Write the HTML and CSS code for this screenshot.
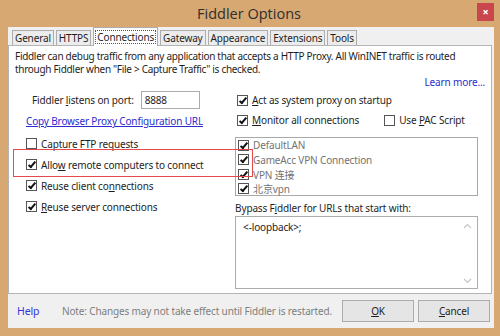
FILE: index.html
```html
<!DOCTYPE html>
<html lang="en">
<head>
  <meta charset="UTF-8">
  <title>Fiddler Options</title>
  <link rel="stylesheet" href="styles.css">
</head>
<body>
  <div class="window">
    <div class="titlebar">
      <span></span>
      <div class="title">Fiddler Options</div>
      <div class="close">×</div>
    </div>
    <div class="client">
      <div class="tabs">
        <div class="tab">General</div>
        <div class="tab">HTTPS</div>
        <div class="tab active"><span class="focus">Connections</span></div>
        <div class="tab">Gateway</div>
        <div class="tab">Appearance</div>
        <div class="tab">Extensions</div>
        <div class="tab">Tools</div>
      </div>
      <div class="panel">
        <p class="intro">Fiddler can debug traffic from any application that accepts a HTTP Proxy. All WinINET traffic is routed through Fiddler when "File &gt; Capture Traffic" is checked.</p>
        <div class="learn"><span class="link">Learn more...</span></div>
        <div class="columns">
          <div class="left">
            <div class="port-row">
              <span>Fiddler <u>l</u>istens on port:</span>
              <div class="port">8888</div>
            </div>
            <div class="link copy">Copy Browser Proxy Configuration URL</div>
            <div class="checks">
              <div class="check"><span class="cb"></span><span>Captur<u>e</u> FTP requests</span></div>
              <div class="check"><span class="cb on"></span><span>Allo<u>w</u> remote computers to connect</span></div>
              <div class="check"><span class="cb on"></span><span>Reuse client co<u>n</u>nections</span></div>
              <div class="check"><span class="cb on"></span><span><u>R</u>euse server connections</span></div>
            </div>
          </div>
          <div class="right">
            <div class="check row"><span class="cb on"></span><span><u>A</u>ct as system proxy on startup</span></div>
            <div class="row monitor">
              <div class="check"><span class="cb on"></span><span><u>M</u>onitor all connections</span></div>
              <div class="check pac"><span class="cb"></span><span>Use <u>P</u>AC Script</span></div>
            </div>
            <div class="list">
              <div class="item"><span class="cb on"></span><span>DefaultLAN</span></div>
              <div class="item"><span class="cb on"></span><span>GameAcc VPN Connection</span></div>
              <div class="item"><span class="cb on"></span><span>VPN 连接</span></div>
              <div class="item"><span class="cb on"></span><span>北京vpn</span></div>
            </div>
            <div class="bypass-label">Bypass F<u>i</u>ddler for URLs that start with:</div>
            <div class="bypass">
              <span class="bypass-text">&lt;-loopback&gt;;</span>
              <div class="scroll">
                <svg width="9" height="6" viewBox="0 0 9 6"><path d="M1 5 L4.5 1.5 L8 5" fill="none" stroke="#c4c4c4" stroke-width="1.2"/></svg>
                <svg width="9" height="6" viewBox="0 0 9 6"><path d="M1 1 L4.5 4.5 L8 1" fill="none" stroke="#c4c4c4" stroke-width="1.2"/></svg>
              </div>
            </div>
          </div>
        </div>
        <div class="mark"></div>
      </div>
      <div class="footer">
        <span class="help">Help</span>
        <span class="note">Note: Changes may not take effect until Fiddler is restarted.</span>
        <div class="buttons">
          <div class="btn"><u>O</u>K</div>
          <div class="btn"><u>C</u>ancel</div>
        </div>
      </div>
    </div>
  </div>
</body>
</html>
```

FILE: styles.css
```css
body {
  margin: 0;
  font-family: "Noto Sans", "Noto Sans CJK SC", sans-serif;
  font-size: 10px;
  letter-spacing: -0.15px;
  color: #1e1e1e;
}
u { text-decoration: underline; text-underline-offset: 1px; }
.window {
  width: 500px;
  height: 336px;
  background: #d8a873;
  padding: 0 6px 8px 8px;
  box-sizing: border-box;
  display: flex;
  flex-direction: column;
}
.titlebar {
  height: 27px;
  display: grid;
  grid-template-columns: 1fr auto 1fr;
  align-items: center;
}
.title {
  font-family: "Open Sans", sans-serif;
  font-size: 14.5px;
  letter-spacing: 0;
  color: #2e2e2e;
  padding-right: 4px;
}
.close {
  justify-self: end;
  margin-right: 0;
  margin-top: -4px;
  width: 17px;
  height: 18px;
  background: #c9474c;
  color: #fff;
  font-size: 11px;
  line-height: 17px;
  text-align: center;
  font-weight: bold;
}
.client {
  flex: 1;
  background: #f0f0f0;
  display: flex;
  flex-direction: column;
}
.tabs {
  display: flex;
  align-items: flex-end;
  padding: 0 0 0 4px;
  height: 18px;
  gap: 2px;
}
.tab {
  height: 15px;
  line-height: 14px;
  padding: 0 2px;
  border: 1px solid #adadad;
  border-bottom: none;
  box-sizing: border-box;
  background: #ececec;
}
.tab.active {
  height: 19px;
  background: #fff;
  margin-bottom: -1px;
  position: relative;
  z-index: 1;
  padding: 2px 1px 0;
}
.focus {
  display: block;
  border: 1px dotted #555;
  line-height: 12px;
  padding: 0 1px;
}
.panel {
  background: #fff;
  border: 1px solid #b4b4b4;
  margin-right: 2px;
  height: 249px;
  box-sizing: border-box;
  position: relative;
  padding: 4px 6px 0 6px;
}
.intro {
  margin: 0;
  line-height: 13px;
  letter-spacing: -0.3px;
}
.learn {
  text-align: right;
  line-height: 13px;
}
.link {
  color: #2c2ccf;
}
.copy {
  text-decoration: underline;
  line-height: 14px;
  margin-top: 5px;
}
.columns {
  display: flex;
  justify-content: space-between;
}
.left {
  padding-left: 11px;
  width: 210px;
}
.port-row {
  display: flex;
  align-items: center;
  gap: 7px;
  margin-top: 2px;
  padding-left: 6px;
}
.port {
  width: 59px;
  height: 18px;
  border: 1px solid #acacac;
  box-sizing: border-box;
  line-height: 16px;
  padding-left: 3px;
}
.checks {
  margin-top: 5px;
}
.check {
  display: flex;
  align-items: center;
  height: 21px;
}
.cb {
  width: 11px;
  height: 11px;
  border: 1px solid #555;
  box-sizing: border-box;
  background: #fff;
  margin-right: 4px;
  position: relative;
  flex: none;
}
.cb.on::after {
  content: "";
  position: absolute;
  left: 3px;
  top: 0;
  width: 2px;
  height: 6px;
  border-right: 2px solid #111;
  border-bottom: 2px solid #111;
  transform: rotate(40deg);
}
.right {
  width: 244px;
  margin-right: 7px;
}
.right > .row {
  margin-top: 2px;
  height: 18px;
  padding-left: 2px;
}
.monitor {
  display: flex;
  gap: 25px;
}
.monitor .check {
  height: 18px;
  margin-top: 0;
}
.list {
  margin-top: 8px;
  height: 59px;
  border: 1px solid #a9a9a9;
  box-sizing: border-box;
  padding: 0 2px;
  color: #737373;
}
.item {
  display: flex;
  align-items: center;
  height: 14.5px;
}
.bypass-label {
  margin-top: 5px;
  line-height: 14px;
}
.bypass {
  margin-top: 1px;
  height: 73px;
  border: 1px solid #acacac;
  box-sizing: border-box;
  display: flex;
  justify-content: space-between;
  padding: 3px 5px 4px 7px;
}
.scroll {
  display: flex;
  flex-direction: column;
  justify-content: space-between;
  padding: 3px 0 0;
}
.mark {
  position: absolute;
  left: 4px;
  top: 103px;
  width: 240px;
  height: 28px;
  border: 1px solid #e5484d;
  box-sizing: border-box;
}
.footer {
  flex: 1;
  display: flex;
  align-items: center;
  padding: 0 4px 0 9px;
}
.help {
  color: #3535e0;
  font-size: 10.5px;
  width: 45px;
}
.note {
  color: #7e7e7e;
  flex: 1;
}
.buttons {
  display: flex;
  gap: 4px;
}
.btn {
  width: 72px;
  height: 22px;
  border: 1px solid #acacac;
  box-sizing: border-box;
  background: #e5e5e5;
  text-align: center;
  line-height: 20px;
}
```
